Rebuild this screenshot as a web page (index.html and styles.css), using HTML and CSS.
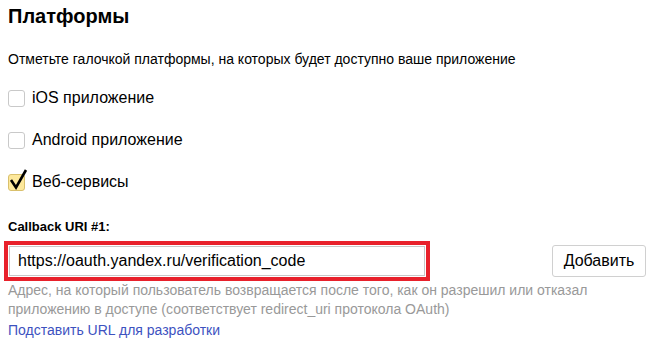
FILE: index.html
```html
<!DOCTYPE html>
<html lang="ru">
<head>
  <meta charset="UTF-8">
  <meta name="viewport" content="width=device-width, initial-scale=1.0">
  <title>Платформы</title>
  <link rel="stylesheet" href="styles.css">
</head>
<body>
  <div class="platforms-section">
    <h2 class="title">Платформы</h2>
    <p class="hint">Отметьте галочкой платформы, на которых будет доступно ваше приложение</p>

    <div class="checks">
      <label class="check">
        <span class="box"></span>
        iOS приложение
      </label>
      <label class="check">
        <span class="box"></span>
        Android приложение
      </label>
      <label class="check">
        <span class="box box-checked">
          <svg class="tick" width="20" height="22" viewBox="0 0 20 22">
            <path d="M3 12 L8 19.5 L18 2" fill="none" stroke="#000" stroke-width="2.6"/>
          </svg>
        </span>
        Веб-сервисы
      </label>
    </div>

    <div class="field-label">Callback URI #1:</div>
    <div class="uri-row">
      <div class="uri-mark">
        <input class="uri-input" type="text" value="https://oauth.yandex.ru/verification_code">
      </div>
      <button class="add-btn">Добавить</button>
    </div>
    <p class="help">Адрес, на который пользователь возвращается после того, как он разрешил или отказал приложению в доступе (соответствует redirect_uri протокола OAuth)</p>
    <a class="dev-link" href="#">Подставить URL для разработки</a>
  </div>
</body>
</html>
```

FILE: styles.css
```css
body {
  margin: 0;
  font-family: 'Liberation Sans', Arial, sans-serif;
  color: #000;
  background: #fff;
}
.platforms-section {
  padding: 5px 10px 0 8px;
}
.title {
  font-size: 20px;
  font-weight: bold;
  margin: 0;
  line-height: 23px;
}
.hint {
  font-size: 14px;
  margin: 23px 0 0;
  line-height: 16px;
}
.checks {
  display: flex;
  flex-direction: column;
  gap: 24px;
  margin-top: 22px;
}
.check {
  display: flex;
  align-items: center;
  gap: 7px;
  font-size: 16px;
  line-height: 18px;
}
.box {
  position: relative;
  width: 15px;
  height: 15px;
  border: 1px solid #c9c9c9;
  border-radius: 3px;
  background: #fff;
  flex-shrink: 0;
}
.box-checked {
  background: #fde89b;
  border-color: #d9c06c;
}
.tick {
  position: absolute;
  left: -1px;
  top: -7px;
}
.field-label {
  font-size: 13px;
  font-weight: bold;
  margin-top: 28px;
  line-height: 15px;
}
.uri-row {
  display: flex;
  align-items: center;
  margin-top: 7px;
  margin-left: -4px;
}
.uri-mark {
  border: 4px solid #e8212b;
  padding: 1px;
}
.uri-input {
  display: block;
  box-sizing: border-box;
  width: 416px;
  height: 30px;
  border: 1px solid #c8c8c8;
  padding: 0 8px;
  font-family: 'Liberation Sans', Arial, sans-serif;
  font-size: 16px;
  color: #000;
  outline: none;
}
.add-btn {
  margin-left: auto;
  width: 94px;
  height: 32px;
  border: 1px solid #d0d0d0;
  border-radius: 3px;
  background: #fff;
  font-family: 'Liberation Sans', Arial, sans-serif;
  font-size: 16px;
  color: #000;
  padding: 0;
}
.help {
  font-size: 14px;
  line-height: 19px;
  color: #999;
  margin: 0;
}
.dev-link {
  display: inline-block;
  margin-top: 3px;
  font-size: 14px;
  line-height: 16px;
  color: #3d52bf;
  text-decoration: none;
}
```
